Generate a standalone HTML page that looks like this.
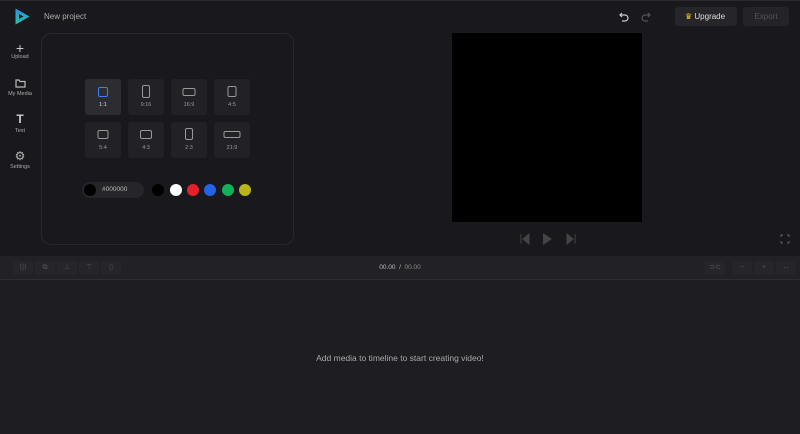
<!DOCTYPE html><html><head><style>
*{margin:0;padding:0;box-sizing:border-box}
body{width:800px;height:434px;background:#19191d;font-family:"Liberation Sans",sans-serif;position:relative;overflow:hidden;color:#aaa}
.a{position:absolute}
.side{font-size:5.5px;color:#aaa;text-align:center;width:40px;left:0}
.tile{position:absolute;width:36px;height:36px;background:#222226;border-radius:3px}
.tile span{position:absolute;bottom:7px;width:100%;text-align:center;font-size:5.5px;color:#999}
.tile i{position:absolute;border:1.2px solid #999;border-radius:2px;left:50%;top:8px;transform:translateX(-50%)}
.c{position:absolute;top:184px;width:12px;height:12px;border-radius:50%}
.tb{position:absolute;top:261px;width:20px;height:14px;background:#26262a;border-radius:2px;font-size:7px;color:#555;text-align:center;line-height:14px}
</style></head><body>
<div class="a" style="left:0;top:0;width:800px;height:1px;background:#2a2a2e"></div>
<svg class="a" style="left:14px;top:8px" width="16" height="17" viewBox="0 0 16 17"><defs><linearGradient id="g" x1="0" y1="0" x2="0" y2="1"><stop offset="0" stop-color="#2f8fe0"/><stop offset="1" stop-color="#1fc8a0"/></linearGradient></defs><path d="M1.5 0.5 L15.5 8.5 L1.5 16.5 Z M5 6 L5 11 L9.5 8.5 Z" fill="url(#g)" fill-rule="evenodd"/></svg>
<div class="a" style="left:44px;top:12px;font-size:8px;color:#aaa">New project</div>
<div class="a side" style="top:40px;font-size:14px;color:#ccc">+</div>
<div class="a side" style="top:54px">Upload</div>
<svg class="a" style="left:15px;top:78px" width="11" height="10"><path d="M1 2h3l1 1.5h5v5.5h-9z" fill="none" stroke="#bbb" stroke-width="1.2"/></svg>
<div class="a side" style="top:91px">My Media</div>
<div class="a side" style="top:112px;font-size:12px;color:#ccc;font-weight:bold">T</div>
<div class="a side" style="top:128px">Text</div>
<div class="a side" style="top:149px;font-size:12px;color:#bbb">⚙</div>
<div class="a side" style="top:164px">Settings</div>
<div class="a" style="left:41px;top:33px;width:253px;height:212px;border:1px solid #28282c;border-radius:10px"></div>
<div class="tile" style="left:85px;top:79px;background:#2c2c31"><i style="width:10px;height:10px;border-color:#3b82f6"></i><span style="color:#ddd">1:1</span></div>
<div class="tile" style="left:128px;top:79px"><i style="width:8px;height:13px;top:6px"></i><span>9:16</span></div>
<div class="tile" style="left:171px;top:79px"><i style="width:13px;height:8px;top:9px"></i><span>16:9</span></div>
<div class="tile" style="left:214px;top:79px"><i style="width:9px;height:11px;top:7px"></i><span>4:5</span></div>
<div class="tile" style="left:85px;top:122px"><i style="width:11px;height:9px"></i><span>5:4</span></div>
<div class="tile" style="left:128px;top:122px"><i style="width:12px;height:9px"></i><span>4:3</span></div>
<div class="tile" style="left:171px;top:122px"><i style="width:8px;height:12px;top:6px"></i><span>2:3</span></div>
<div class="tile" style="left:214px;top:122px"><i style="width:17px;height:7px;top:9px"></i><span>21:9</span></div>
<div class="a" style="left:82px;top:182px;width:62px;height:16px;background:#26262a;border-radius:8px"></div>
<div class="c" style="left:84px;top:184px;background:#000"></div>
<div class="a" style="left:102px;top:186px;font-size:6.5px;color:#bbb">#000000</div>
<div class="c" style="left:152px;background:#000"></div>
<div class="c" style="left:170px;background:#fff"></div>
<div class="c" style="left:187px;background:#e5202a"></div>
<div class="c" style="left:204px;background:#2462e6"></div>
<div class="c" style="left:222px;background:#13b05c"></div>
<div class="c" style="left:239px;background:#b9b51a"></div>
<div class="a" style="left:452px;top:33px;width:190px;height:189px;background:#000"></div>
<svg class="a" style="left:519px;top:233px" width="60" height="12"><path d="M2 1v10M10 1L4 6l6 5z" fill="#444" stroke="#444"/><path d="M24 0l9 6-9 6z" fill="#444"/><path d="M48 1l6 5-6 5zM56 1v10" fill="#444" stroke="#444"/></svg>
<svg class="a" style="left:780px;top:234px" width="10" height="10"><path d="M1 3V1h2M7 1h2v2M9 7v2H7M3 9H1V7" fill="none" stroke="#555" stroke-width="1.2"/></svg>
<svg class="a" style="left:619px;top:11px" width="32" height="11"><path d="M3 2L1 4l2 2M1 4h5a3 3 0 010 6H3" fill="none" stroke="#ccc" stroke-width="1.2"/><path d="M29 2l2 2-2 2M31 4h-5a3 3 0 000 6h3" fill="none" stroke="#555" stroke-width="1.2"/></svg>
<div class="a" style="left:675px;top:7px;width:62px;height:19px;background:#26262a;border-radius:3px;font-size:8px;color:#ddd;line-height:19px;padding-left:10px"><span style="color:#f5c518">♛</span> Upgrade</div>
<div class="a" style="left:743px;top:7px;width:46px;height:19px;background:#242428;border-radius:3px;font-size:8px;color:#555;line-height:19px;text-align:center">Export</div>
<div class="a" style="left:0;top:256px;width:800px;height:23px;background:#222226"></div>
<div class="a" style="left:0;top:279px;width:800px;height:1px;background:#2e2e33"></div>
<div class="a" style="left:0;top:280px;width:800px;height:154px;background:#1e1e22"></div>
<div class="tb" style="left:13px">⟨|⟩</div><div class="tb" style="left:35px">⧉</div><div class="tb" style="left:57px">⊥</div><div class="tb" style="left:79px">⊤</div><div class="tb" style="left:101px">▯</div>
<div class="tb" style="left:705px">⊃⊂</div><div class="tb" style="left:732px">−</div><div class="tb" style="left:754px">+</div><div class="tb" style="left:776px">↔</div>
<div class="a" style="left:0;top:264px;width:800px;text-align:center;font-size:6.5px;color:#bbb">00.00 &nbsp;/&nbsp; <span style="color:#888">00.00</span></div>
<div class="a" style="left:0;top:353px;width:800px;text-align:center;font-size:8.5px;color:#aaa">Add media to timeline to start creating video!</div>
</body></html>
